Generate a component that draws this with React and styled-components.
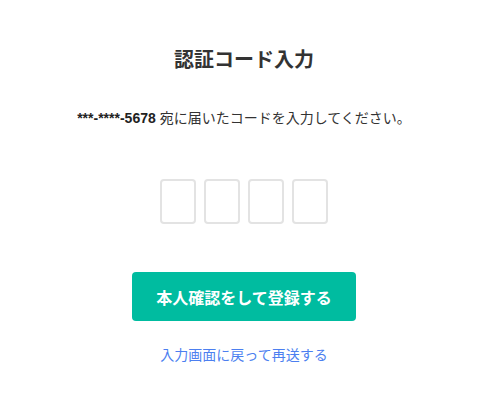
import React from "react";
import styled, { createGlobalStyle } from "styled-components";

const Global = createGlobalStyle`
  html, body { margin: 0; padding: 0; background: #fff; }
  body { font-family: "Liberation Sans", "Noto Sans CJK JP", sans-serif; color: #333; }
`;

const Page = styled.main`
  width: 490px;
  height: 411px;
  display: flex;
  flex-direction: column;
  align-items: center;
  padding-top: 45px;
  padding-right: 2px;
  box-sizing: border-box;
`;

const Title = styled.h1`
  margin: 0;
  font-size: 20px;
  font-weight: 700;
  line-height: 30px;
  color: #333;
`;

const Message = styled.p`
  margin: 32px 0 0;
  font-size: 14px;
  line-height: 22px;
  color: #333;
`;

const Phone = styled.strong`
  font-weight: 700;
  color: #222;
`;

const Codes = styled.div`
  display: flex;
  gap: 8px;
  margin-top: 50px;
`;

const CodeBox = styled.input`
  width: 36px;
  height: 45px;
  box-sizing: border-box;
  border: 2px solid #e3e3e3;
  border-radius: 4px;
  outline: none;
  background: #fff;
  padding: 0;
  text-align: center;
  font-size: 20px;
`;

const Submit = styled.button`
  margin-top: 48px;
  width: 224px;
  height: 49px;
  border: none;
  border-radius: 4px;
  background: #00bca0;
  color: #fff;
  font-family: "Noto Sans CJK JP", sans-serif;
  font-size: 16px;
  font-weight: 700;
  cursor: pointer;
`;

const Resend = styled.a`
  margin-top: 22px;
  font-size: 14px;
  line-height: 22px;
  color: #4c7ff0;
  text-decoration: none;
  font-family: "Noto Sans CJK JP", sans-serif;
`;

export default function App() {
  return (
    <>
      <Global />
      <Page>
        <Title>認証コード入力</Title>
        <Message>
          <Phone>***-****-5678</Phone> 宛に届いたコードを入力してください。
        </Message>
        <Codes>
          {[0, 1, 2, 3].map((i) => (
            <CodeBox key={i} maxLength={1} />
          ))}
        </Codes>
        <Submit>本人確認をして登録する</Submit>
        <Resend href="#">入力画面に戻って再送する</Resend>
      </Page>
    </>
  );
}
